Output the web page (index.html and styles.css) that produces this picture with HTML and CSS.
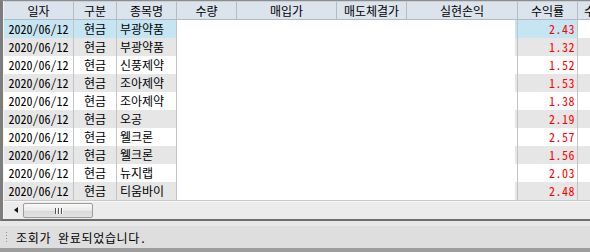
FILE: index.html
```html
<!DOCTYPE html>
<html>

<head>
    <meta charset="utf-8">
    <title>체결내역</title>
    <link rel="stylesheet" href="styles.css">
</head>

<body>
    <div class="window">
        <div class="grid">
            <div class="head">
                <span>일자</span>
                <span>구분</span>
                <span>종목명</span>
                <span>수량</span>
                <span>매입가</span>
                <span>매도체결가</span>
                <span>실현손익</span>
                <span>수익률</span>
                <span class="last">수익</span>
            </div>

            <div class="rows">
                <!-- 수량 ~ 실현손익 columns are not drawn yet -->
                <div class="blank"></div>

                <span class="c sel">2020/06/12</span><span class="c sel">현금</span><span class="c sel name">부광약품</span><span class="c sel"></span><span class="c sel num">2.43</span><span class="c end"></span>
                <span class="c alt">2020/06/12</span><span class="c alt">현금</span><span class="c alt name">부광약품</span><span class="c alt"></span><span class="c alt num">1.32</span><span class="c alt end"></span>
                <span class="c">2020/06/12</span><span class="c">현금</span><span class="c name">신풍제약</span><span class="c"></span><span class="c num">1.52</span><span class="c end"></span>
                <span class="c alt">2020/06/12</span><span class="c alt">현금</span><span class="c alt name">조아제약</span><span class="c alt"></span><span class="c alt num">1.53</span><span class="c alt end"></span>
                <span class="c">2020/06/12</span><span class="c">현금</span><span class="c name">조아제약</span><span class="c"></span><span class="c num">1.38</span><span class="c end"></span>
                <span class="c alt">2020/06/12</span><span class="c alt">현금</span><span class="c alt name">오공</span><span class="c alt"></span><span class="c alt num">2.19</span><span class="c alt end"></span>
                <span class="c">2020/06/12</span><span class="c">현금</span><span class="c name">웰크론</span><span class="c"></span><span class="c num">2.57</span><span class="c end"></span>
                <span class="c alt">2020/06/12</span><span class="c alt">현금</span><span class="c alt name">웰크론</span><span class="c alt"></span><span class="c alt num">1.56</span><span class="c alt end"></span>
                <span class="c">2020/06/12</span><span class="c">현금</span><span class="c name">뉴지랩</span><span class="c"></span><span class="c num">2.03</span><span class="c end"></span>
                <span class="c alt">2020/06/12</span><span class="c alt">현금</span><span class="c alt name">티움바이</span><span class="c alt"></span><span class="c alt num">2.48</span><span class="c alt end"></span>
            </div>

            <div class="hscroll">
                <span class="arrow"></span>
                <span class="thumb"><i></i><i></i><i></i></span>
            </div>
        </div>

        <div class="status">
            <span class="grip"></span>
            <span class="msg">조회가 완료되었습니다.</span>
        </div>
    </div>
</body>

</html>
```

FILE: styles.css
```css
* {
    box-sizing: border-box;
}

body {
    margin: 0;
    width: 590px;
    height: 252px;
    overflow: hidden;
    background-color: #dfdfdf;
    font-family: "Noto Sans Mono CJK KR", "Noto Sans CJK KR", "Noto Sans", monospace;
    font-size: 12px;
    color: #000;
}

.window {
    display: flex;
    flex-direction: column;
    height: 252px;
}

/* grid frame */
.grid {
    border-top: 1px solid #8c8c8c;
    border-left: 3px solid #7d7d7d;
    border-bottom: 2px solid #6e6e6e;
    padding-left: 1px;
    background-color: #fff;
    box-shadow: inset 1px 0 0 #f4f4f4;
}

.head {
    display: grid;
    grid-template-columns: 70px 43px 60px 60px 100px 70px 111px 60px 60px;
    height: 19px;
    background-color: #dbe3ec;
    border-top: 1px solid #c9d0d8;
    border-bottom: 1px solid #b3b9c0;
}

.head span {
    border-right: 1px solid #b4bcc5;
    text-align: center;
    line-height: 17px;
    white-space: nowrap;
    overflow: hidden;
}

.head span.last {
    border-right: none;
    text-align: left;
    padding-left: 6px;
}

/* 3px strip at the end of 실현손익 still shows the row colour */
.rows {
    display: grid;
    grid-template-columns: 70px 43px 60px 338px 3px 60px 1fr;
    grid-auto-rows: 18px;
}

.blank {
    grid-column: 4;
    grid-row: 1 / span 10;
    background-color: #fff;
}

.c {
    border-right: 1px solid #c4c4c4;
    text-align: center;
    line-height: 18px;
    white-space: nowrap;
    overflow: hidden;
}

.c.name {
    text-align: left;
    padding-left: 3px;
}

.c.num {
    text-align: right;
    padding-right: 2px;
    color: #ff0000;
    letter-spacing: 0.5px;
}

.c.end {
    border-right: none;
}

.alt {
    background-color: #e6e6e6;
}

.sel {
    background-color: #c6e5f2;
}

/* horizontal scroll bar */
.hscroll {
    position: relative;
    height: 19px;
    border-top: 1px solid #c9c9c9;
    background-color: #ececec;
    box-shadow: inset 0 1px 0 #f8f8f8;
}

.arrow {
    position: absolute;
    left: 10px;
    top: 6px;
    width: 0;
    height: 0;
    border-top: 3px solid transparent;
    border-bottom: 3px solid transparent;
    border-right: 4px solid #111;
}

.thumb {
    position: absolute;
    left: 19px;
    top: 2px;
    width: 70px;
    height: 15px;
    border: 1px solid #9c9c9c;
    border-radius: 2px;
    background: linear-gradient(#fafafa, #e9e9e9 50%, #d8d8d8 51%, #e2e2e2);
    display: flex;
    justify-content: center;
    align-items: center;
    gap: 2px;
}

.thumb i {
    width: 1px;
    height: 6px;
    background-color: #555;
    box-shadow: 1px 0 0 #fff;
}

/* status bar */
.status {
    flex: 1;
    display: flex;
    align-items: center;
    gap: 8px;
    padding-left: 5px;
    border-top: 5px solid #e8e8e8;
    border-bottom: 4px solid #9d9d9d;
    background-color: #dedede;
    font-size: 12px;
}

.status .msg {
    letter-spacing: 0.7px;
}

.grip {
    width: 3px;
    height: 13px;
    background-image: radial-gradient(circle, #8a8a8a 0.7px, transparent 0.8px);
    background-size: 3px 3px;
}
```
